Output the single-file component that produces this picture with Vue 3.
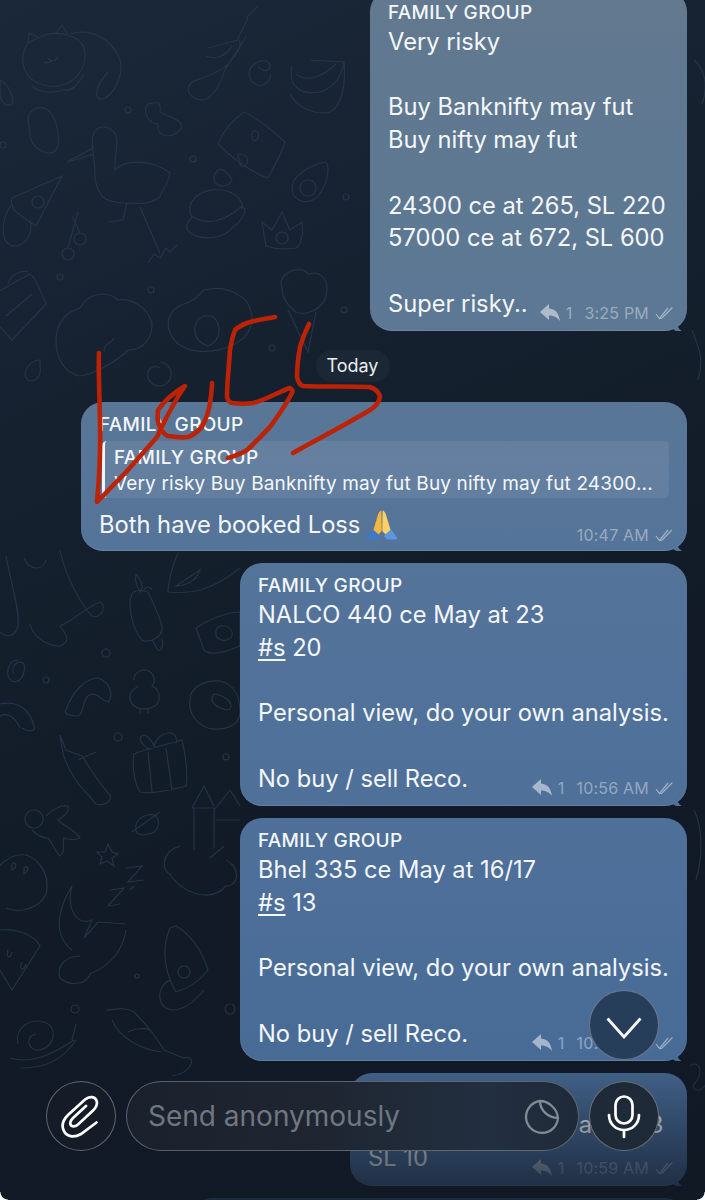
<template>
  <div class="screen">
    <svg class="doodles" viewBox="0 0 705 1200" width="705" height="1200">
      <path v-for="(d, i) in doodles" :key="i" :d="d" />
      <circle v-for="(c, i) in dots" :key="'c' + i" :cx="c[0]" :cy="c[1]" :r="c[2]" />
    </svg>

    <div class="feed">
      <template v-for="msg in messages" :key="msg.id">
        <div v-if="msg.date" class="dateChip">{{ msg.date }}</div>

        <div class="bubble" :class="msg.size">
          <div class="sender">{{ msg.sender }}</div>

          <div v-if="msg.reply" class="replyBox">
            <div class="replyName">{{ msg.reply.name }}</div>
            <div class="replyText">{{ msg.reply.text }}</div>
          </div>

          <div v-for="(line, i) in msg.lines" :key="i" class="line">
            <u v-if="line.tag" class="tag">{{ line.tag }}</u>{{ line.text || line }}
          </div>

          <div v-if="msg.last" class="lastRow" :class="{ afterReply: msg.reply }">
            <span class="line">{{ msg.last }}</span>
            <svg v-if="msg.reply" class="pray" viewBox="0 0 32 32" width="32" height="32">
              <path fill="#f5b83d" d="M15.400 1.500c-1.600.4-2.600 2-3.300 4L7.400 21l5 4.500 3.300-3.500z" />
              <path fill="#fbd067" d="M16.600 1.500c1.600.4 2.600 2 3.300 4L24.600 21l-5 4.500-3.300-3.500z" />
              <path fill="#3f79c9" d="M7 20.500 1 28.500c-.6 1.200 0 2 1.200 2h8.800l3-3.500z" />
              <path fill="#5a97e0" d="M25 20.500l6 8c.6 1.200 0 2-1.200 2H21l-3-3.500z" />
            </svg>
            <span class="meta">
              <template v-if="msg.replies">
                <svg class="replyIcon" viewBox="0 0 20 18" width="20" height="18">
                  <path d="M0 8 9 0v4.500c7 .5 10 5.500 11 12.500-3-4-7-5.500-11-5.500V16z" />
                </svg>
                <span class="replyCount">{{ msg.replies }}</span>
              </template>
              <span>{{ msg.time }}</span>
              <svg class="ticks" viewBox="0 0 20 14" width="20" height="14">
                <path d="M1 8 4.500 12.500 13 2M7 12 17.500 1.500 M4.500 12.500H7" />
              </svg>
            </span>
          </div>
        </div>
      </template>
      <div class="bubble stub"></div>
    </div>

    <div class="bottomFade"></div>

    <svg class="scribble" viewBox="0 0 705 1200" width="705" height="1200">
      <path d="M99 353C98 380 101 420 100 450C100 470 98 490 97 502L127 471L157 437C165 420 175 400 185 386C175 392 165 400 158 410C157 418 158 424 160 427C163 433 165 435 168 436C175 437 182 438 188 437C194 435 198 431 202 427C206 419 209 411 210 403C211 396 212 390 212 383" />
      <path d="M275 317C265 319 256 320 247 323C242 325 238 327 235 330C232 338 231 344 230 350C229 366 227 382 227 397C228 401 230 403 233 403C240 404 246 404 253 403C266 400 278 392 290 388C292 389 293 391 292 393C286 405 278 416 270 427C262 435 255 443 247 450C241 454 235 456 228 458" />
      <path d="M309 324C305 332 302 340 300 347C298 358 297 368 297 377C298 382 300 385 303 386C325 387 348 386 370 387C376 389 379 392 380 397C379 402 375 407 370 410C345 425 318 439 293 453" />
    </svg>

    <button class="scrollDown">
      <svg viewBox="0 0 36 22" width="36" height="22">
        <path d="M1.500 1.500 18 20 34.500 1.500" />
      </svg>
    </button>

    <div class="inputBar">
      <button class="roundBtn attach">
        <svg viewBox="60 1093 42 45" width="42" height="45">
          <path d="M96.500 1121.500 81 1133C74 1137 66 1136 63.500 1129C61 1123 64 1118 68 1114L85 1098.500C90 1094.500 95 1096 96.500 1099.500C98 1103.500 96 1106.500 93 1109.500L78 1123.500C75 1126 71.500 1126 70.500 1123.500C69.500 1121 71 1119 73 1117L86 1105" />
        </svg>
      </button>
      <div class="inputField">
        <span class="placeholder">Send anonymously</span>
        <svg class="stickerIcon" viewBox="525 1098 36 36" width="36" height="36">
          <path d="M541 1101A16 16 0 1 0 559 1118C558 1108 549 1101 541 1101C541 1110 549 1118 559 1118" />
        </svg>
      </div>
      <button class="roundBtn mic">
        <svg viewBox="604 1093 40 46" width="40" height="46">
          <rect x="615.500" y="1096.500" width="17" height="27" rx="8.500" />
          <path d="M609 1115C609 1124 616 1130 624 1130C632 1130 639 1124 639 1115M624 1130V1137" />
        </svg>
      </button>
    </div>

    <div class="corner left"></div>
    <div class="corner right"></div>
  </div>
</template>

<script setup>
const messages = [
  {
    id: 1,
    size: 'small',
    sender: 'FAMILY GROUP',
    lines: ['Very risky', '\u00a0', 'Buy Banknifty may fut', 'Buy nifty may fut', '\u00a0', '24300 ce at 265, SL 220', '57000 ce at 672, SL 600', '\u00a0'],
    last: 'Super risky..',
    replies: 1,
    time: '3:25 PM',
  },
  {
    id: 2,
    date: 'Today',
    size: 'wide',
    sender: 'FAMILY GROUP',
    reply: { name: 'FAMILY GROUP', text: 'Very risky Buy Banknifty may fut Buy nifty may fut 24300...' },
    lines: [],
    last: 'Both have booked Loss',
    time: '10:47 AM',
  },
  {
    id: 3,
    size: 'medium',
    sender: 'FAMILY GROUP',
    lines: ['NALCO 440 ce May at 23', { tag: '#s', text: ' 20' }, '\u00a0', 'Personal view, do your own analysis.', '\u00a0'],
    last: 'No buy / sell Reco.',
    replies: 1,
    time: '10:56 AM',
  },
  {
    id: 4,
    size: 'medium',
    sender: 'FAMILY GROUP',
    lines: ['Bhel 335 ce May at 16/17', { tag: '#s', text: ' 13' }, '\u00a0', 'Personal view, do your own analysis.', '\u00a0'],
    last: 'No buy / sell Reco.',
    replies: 1,
    time: '10:58 AM',
  },
  {
    id: 5,
    size: 'tiny',
    sender: 'FAMILY GROUP',
    lines: ['Ashok 210 ce May at 12/13'],
    last: 'SL 10',
    replies: 1,
    time: '10:59 AM',
  },
]

// wallpaper doodles, traced roughly from the reference
const doodles = [
  // cat
  'M28 43C22 52 21 62 26 72C32 84 50 90 66 84C80 78 88 62 84 48C80 36 62 32 48 34C42 36 36 38 28 43ZM28 43 29 33 38 37M56 33 62 25 68 35M48 58C50 62 56 62 58 56M44 62C48 64 50 62 52 60',
  'M70 34C90 28 112 38 120 60C124 74 114 96 102 99C94 100 94 88 108 72M84 74C78 84 72 92 64 90C50 94 38 92 32 86',
  // bottle
  'M248 18 238 38C244 46 236 54 230 62C222 72 206 76 192 82C184 90 190 100 204 100C212 98 222 82 224 72C232 56 242 46 246 36M246 18 258 6M208 48 238 40M206 56C216 60 226 56 232 46',
  // banana
  'M292 66C288 84 298 96 320 92C334 88 342 76 344 62L310 60M290 94C296 106 314 116 330 112C342 106 346 84 344 62M296 74C306 82 322 78 336 64',
  // pillow
  'M244 112C230 122 222 134 218 144C230 156 250 172 268 178C276 164 282 152 285 142C272 130 258 118 244 112ZM252 136C250 128 262 130 258 138 256 142 252 142 252 136ZM240 160C232 152 246 152 248 160 246 170 238 168 240 160Z',
  // ghost
  'M28 120C28 108 42 104 50 112C58 122 62 146 54 152C44 156 30 146 30 134Z',
  // bird
  'M67 162 93 148C90 134 96 127 103 127C112 127 117 134 117 142C117 152 114 160 115 170C124 160 150 158 170 173C168 186 160 192 160 197C150 204 140 204 130 203C116 204 106 200 103 197C96 188 94 178 95 170C94 160 93 154 93 148ZM67 162C76 160 86 156 94 154M127 203 123 220 108 222M140 207 160 253M148 263 154 254 160 258 166 248 170 252 177 245',
  // pizza
  'M62 176 12 198C8 210 24 218 36 226ZM62 176 36 226M12 204C0 220 0 244 14 246C26 246 34 232 30 220M38 196A6 6 0 1 0 38.100 196',
  // cherries
  'M68 248A6 6 0 1 0 68.100 248M80 233A6 6 0 1 0 80.100 233M68 248 78 212M80 233 72 216',
  // burger
  'M190 212C188 196 206 188 222 190C238 192 244 204 242 208C250 206 240 224 234 226C224 240 202 240 192 234C184 230 186 222 192 218Z M192 216C206 226 224 222 242 206',
  // crown
  'M262 222 272 230 282 212 290 230 302 222C304 236 300 246 296 248C284 250 272 248 266 246Z M282 232A6 6 0 1 0 282.100 232',
  // avocado
  'M326 162C330 168 328 184 318 196C308 206 294 202 292 190C290 176 312 164 326 162ZM308 180A8 8 0 1 0 308.100 180',
  // cupcake
  'M148 104C156 102 162 100 160 112C170 118 186 120 180 130C170 140 156 136 158 124C148 124 142 110 148 104Z',
  // popcorn
  'M-6 294 26 276C32 270 36 280 46 304L12 340L-8 318M8 284C12 272 24 270 28 272M6 316 32 294',
  // broccoli cloud
  'M80 308C90 290 110 292 118 300C130 298 148 306 152 324C152 340 142 350 128 350C118 360 96 374 80 376C60 372 52 348 58 328C62 316 72 310 80 308ZM104 352C104 342 112 344 114 338',
  // hamster
  'M204 290C220 286 232 290 240 296C248 300 256 316 250 328C244 348 200 360 178 344C164 330 164 312 184 304C192 302 196 298 204 290ZM204 316C192 320 190 340 208 346C222 340 222 324 212 316Z',
  // ice cream
  'M282 288C276 272 302 264 308 274C322 270 330 282 326 296C322 310 306 316 296 312C288 306 282 298 282 288ZM288 310 308 352 316 312',
  // swirl
  'M160 362A12 12 0 1 1 148 378C146 370 152 364 160 368',
  'M258 66C262 72 270 72 270 66C270 60 260 58 252 66C246 72 250 84 260 86C268 84 272 76 270 74',
  // dino foot
  'M6 556C10 580 20 610 18 626C14 640 4 636 0 632M60 550C66 580 84 608 92 616C100 620 108 606 100 602C88 606 74 620 60 626C68 636 70 642 60 646C44 646 32 634 30 624',
  'M24 558C30 572 44 570 46 560',
  // popsicle
  'M132 594C128 602 130 626 142 640C150 644 164 636 162 626C158 612 150 596 148 592C142 590 134 590 132 594ZM152 640 158 650C162 652 164 644 162 638M136 574C134 582 138 588 140 592C146 584 138 578 136 574M144 590C146 586 150 586 152 590',
  // envelope / heart
  'M196 628C210 618 230 612 240 612V646C226 652 210 656 204 650ZM216 630C220 622 234 626 232 636C226 644 214 640 216 630Z',
  // boat top
  'M178 553C172 566 168 584 168 592C190 594 210 592 240 568M176 586 200 570C196 582 184 586 176 586Z',
  // swirl
  'M18 660C8 660 4 676 12 681C20 684 26 674 24 664C18 658 10 668 14 674',
  // shrimp
  'M66 710C72 692 86 678 98 678C110 682 114 696 108 702C100 700 96 690 88 696C82 702 84 714 78 716C72 716 62 714 66 710Z',
  // chick
  'M134 680A10 10 0 1 1 152 686C162 690 162 706 150 708C138 712 128 704 130 694C132 690 136 688 138 686M140 710V714M148 708V714',
  // donut
  'M190 700C190 686 206 680 220 681C232 684 240 692 240 712C240 728 220 731 208 728C196 724 188 712 190 700ZM214 694C228 696 236 706 228 710C216 708 208 702 214 694Z',
  // rainbow
  'M0 704C18 700 30 710 34 726C36 732 28 732 22 728M0 716C8 712 16 718 20 728',
  // pencil
  'M60 735 66 750 82 756C90 768 100 785 110 795C112 802 104 806 96 804L84 790C74 780 64 762 62 748Z M78 760 96 752',
  // gift
  'M134 754C148 748 170 744 182 740C186 756 188 776 186 786C172 790 154 794 140 792C134 782 132 766 134 754ZM148 752 152 792M166 748 172 790M150 750C130 738 146 726 154 746C158 730 180 728 176 744',
  // gingerbread
  'M34 810A9 9 0 1 0 34.100 810M46 816C52 810 62 804 68 806C70 812 64 816 58 820C64 826 78 832 80 838C76 840 70 840 64 838C62 844 66 852 60 856C54 850 52 842 48 838C42 838 36 834 32 830',
  // planet
  'M136 830C134 818 148 812 156 816C162 824 156 834 148 834C142 836 136 834 136 830ZM132 832 160 812',
  // castle
  'M192 808 204 786 214 806M192 808H214M194 808V850M214 808V848M214 810 230 790 240 806M216 820H240',
  // moon planet
  'M-8 880C-4 864 12 853 26 855C42 860 50 878 46 894C40 908 20 914 6 908M12 864C16 860 18 868 12 870ZM24 868C28 864 30 870 24 874Z',
  // crescent
  'M72 886C56 912 54 936 72 950M72 886C66 908 76 926 92 920L84 938 98 922 126 924M80 956C66 956 56 966 60 978C68 986 86 986 90 974C104 968 122 956 126 930',
  // zzz
  'M126 868 142 866 128 882 144 880M110 890 124 888 108 906 120 904M130 890 134 886',
  // watermelon
  'M0 930C14 928 34 934 40 946L12 990 0 970M8 950C6 958 10 960 12 952M22 962C18 970 24 972 26 964',
  // rocket
  'M170 928C160 950 166 975 176 992C190 988 200 980 208 970C202 950 190 934 176 926ZM184 966A6 6 0 1 0 184.100 966M170 980C156 986 156 1008 172 1010C186 1010 196 1000 204 990',
  // cloud
  'M180 846C160 852 162 872 170 874C180 892 210 904 226 886C240 886 240 866 226 860M210 858 224 846',
  // star
  'M108 844 112 852 118 854 112 858 114 866 107 861 100 864 102 857 97 852 105 852Z',
  // snail
  'M18 1044C14 1028 30 1018 44 1022C58 1026 56 1046 40 1050C28 1052 24 1036 36 1034M10 1058C30 1064 50 1056 74 1040M72 1040 76 1024M20 1068C40 1068 60 1064 76 1040',
  // carrot drink
  'M106 1010C114 1010 124 1006 134 1012C150 1028 158 1040 164 1050L184 1058C198 1054 192 1074 172 1076M112 1020C118 1036 140 1050 162 1052M128 1032C136 1028 146 1028 150 1030',
  // right side
  'M694 60C706 70 708 88 702 104M692 330C700 350 704 360 698 380M694 810C704 830 702 860 696 880M690 1066C700 1058 704 1076 694 1084C690 1090 700 1094 706 1084',
  'M0 80C8 84 14 96 12 104C4 108 0 100 0 92Z',
  'M40 360C30 360 20 374 28 380C36 384 42 374 40 366Z',
  'M218 170C206 182 224 194 232 180C228 172 222 168 218 170Z',
]

const dots = [
  [128, 110, 3], [193, 159, 3], [60, 277, 3], [151, 290, 3], [346, 197, 3], [344, 310, 3], [272, 348, 3],
  [3, 145, 3], [106, 653, 4], [46, 680, 3], [118, 737, 4], [226, 757, 3], [137, 976, 2], [75, 1009, 4], [230, 1009, 5],
]
</script>

<style scoped>
.screen {
  position: relative;
  width: 705px;
  height: 1200px;
  overflow: hidden;
  font-family: Inter, "Liberation Sans", sans-serif;
  color: #f4f7fa;
  background: linear-gradient(155deg, #1a2839 0%, #15202e 35%, #111a26 65%, #111925 100%);
}

.doodles {
  position: absolute;
  top: 0;
  left: 0;
  fill: none;
  stroke: #2a3b4f;
  stroke-width: 1.200;
  opacity: 0.75;
}

.feed {
  position: relative;
  display: flex;
  flex-direction: column;
  align-items: flex-end;
  gap: 12px;
  margin-top: -10px;
  padding-right: 18px;
}

.dateChip {
  align-self: center;
  height: 32px;
  margin: 7px 0 8px 18px;
  padding: 0 11px;
  border-radius: 16px;
  background: #1c2736;
  font-size: 18px;
  line-height: 32px;
  color: #e9edf1;
}

.bubble {
  position: relative;
  box-sizing: border-box;
  padding: 10px 12px 11px 18px;
  border-radius: 22px;
  background: linear-gradient(180deg, #62798f 0px, #5c7894 300px, #53739a 600px, #4a6d98 1000px, #446792 1200px) fixed;
  box-shadow: inset 0 -1px 0 rgba(255, 255, 255, 0.12);
}

.bubble::after {
  content: '';
  position: absolute;
  right: -8px;
  bottom: 0;
  width: 30px;
  height: 24px;
  background: linear-gradient(180deg, #62798f 0px, #5c7894 300px, #53739a 600px, #4a6d98 1000px, #446792 1200px) fixed;
  clip-path: path('M8 0 C8 10 10 19 17 24 C13 25 9 24 7 20 C5 23 2 24 0 24 Z');
}

.small { width: 317px; }
.wide { width: 606px; padding-bottom: 9px; }
.medium { width: 447px; }
.tiny { width: 337px; }
.stub { width: 497px; height: 60px; }

.sender {
  height: 26px;
  font-size: 19px;
  font-weight: 500;
  line-height: 26px;
  letter-spacing: 0.3px;
}

.line {
  font-size: 23.700px;
  line-height: 32.700px;
  white-space: pre-wrap;
}

.tag {
  text-underline-offset: 3px;
  text-decoration-thickness: 1.500px;
}

.replyBox {
  box-sizing: border-box;
  width: 567px;
  height: 57px;
  margin: 3px 0 0 3px;
  padding: 4px 0 0 9px;
  border-left: 3px solid #f2f5f8;
  border-radius: 5px;
  background: rgba(255, 255, 255, 0.08);
}

.replyName {
  font-size: 19px;
  font-weight: 500;
  line-height: 26px;
  letter-spacing: 0.3px;
}

.replyText {
  font-size: 19px;
  line-height: 25px;
  white-space: nowrap;
  letter-spacing: 0.150px;
}

.lastRow {
  display: flex;
  align-items: flex-start;
}

.afterReply {
  margin-top: 11px;
}

.pray {
  margin: 0 0 0 6px;
}

.meta {
  display: flex;
  align-items: center;
  align-self: flex-end;
  gap: 6px;
  margin-left: auto;
  margin-bottom: -3px;
  height: 20px;
  font-size: 16px;
  letter-spacing: 0.200px;
  color: rgba(255, 255, 255, 0.4);
}

.replyIcon {
  fill: rgba(255, 255, 255, 0.5);
}

.replyCount {
  margin-right: 6px;
}

.ticks {
  fill: none;
  stroke: rgba(255, 255, 255, 0.45);
  stroke-width: 1.200;
}

.bottomFade {
  position: absolute;
  left: 0;
  right: 0;
  bottom: 0;
  height: 134px;
  background: linear-gradient(180deg, rgba(17, 25, 37, 0.1), rgba(17, 25, 37, 0.78));
}

.scribble {
  position: absolute;
  top: 0;
  left: 0;
  fill: none;
  stroke: #bb2206;
  stroke-width: 4.600;
  stroke-linecap: round;
  stroke-linejoin: round;
}

.scrollDown {
  position: absolute;
  top: 990px;
  left: 589px;
  box-sizing: border-box;
  width: 70px;
  height: 70px;
  padding: 5px 0 0 0;
  display: flex;
  align-items: center;
  justify-content: center;
  border: 1px solid rgba(255, 255, 255, 0.3);
  border-radius: 50%;
  background: #273e5b;
}

.scrollDown svg {
  fill: none;
  stroke: #f6f8fa;
  stroke-width: 2.800;
}

.inputBar {
  position: absolute;
  left: 46px;
  bottom: 49px;
  display: flex;
  gap: 10px;
}

.roundBtn {
  box-sizing: border-box;
  width: 70px;
  height: 70px;
  padding: 0;
  display: flex;
  align-items: center;
  justify-content: center;
  border: 1px solid rgba(255, 255, 255, 0.32);
  border-radius: 50%;
}

.roundBtn svg {
  fill: none;
  stroke: #fff;
  stroke-width: 2.700;
  stroke-linecap: round;
}

.attach {
  background: #151c27;
}

.mic {
  background: #1f2a39;
}

.inputField {
  box-sizing: border-box;
  width: 453px;
  height: 70px;
  padding: 0 18px 0 21px;
  display: flex;
  align-items: center;
  justify-content: space-between;
  border: 1px solid rgba(255, 255, 255, 0.28);
  border-radius: 35px;
  background: linear-gradient(90deg, #1b212c 0%, #1f2632 45%, #222f40 80%, #1f2a39 100%);
}

.placeholder {
  font-size: 28px;
  color: #6f7780;
}

.stickerIcon {
  fill: none;
  stroke: #828a94;
  stroke-width: 2.300;
}

.corner {
  position: absolute;
  bottom: 0;
  width: 8px;
  height: 8px;
}

.corner.left {
  left: 0;
  background: radial-gradient(circle at 100% 0, transparent 7px, #fff 8px);
}

.corner.right {
  right: 0;
  background: radial-gradient(circle at 0 0, transparent 7px, #fff 8px);
}

button {
  font: inherit;
}
</style>
